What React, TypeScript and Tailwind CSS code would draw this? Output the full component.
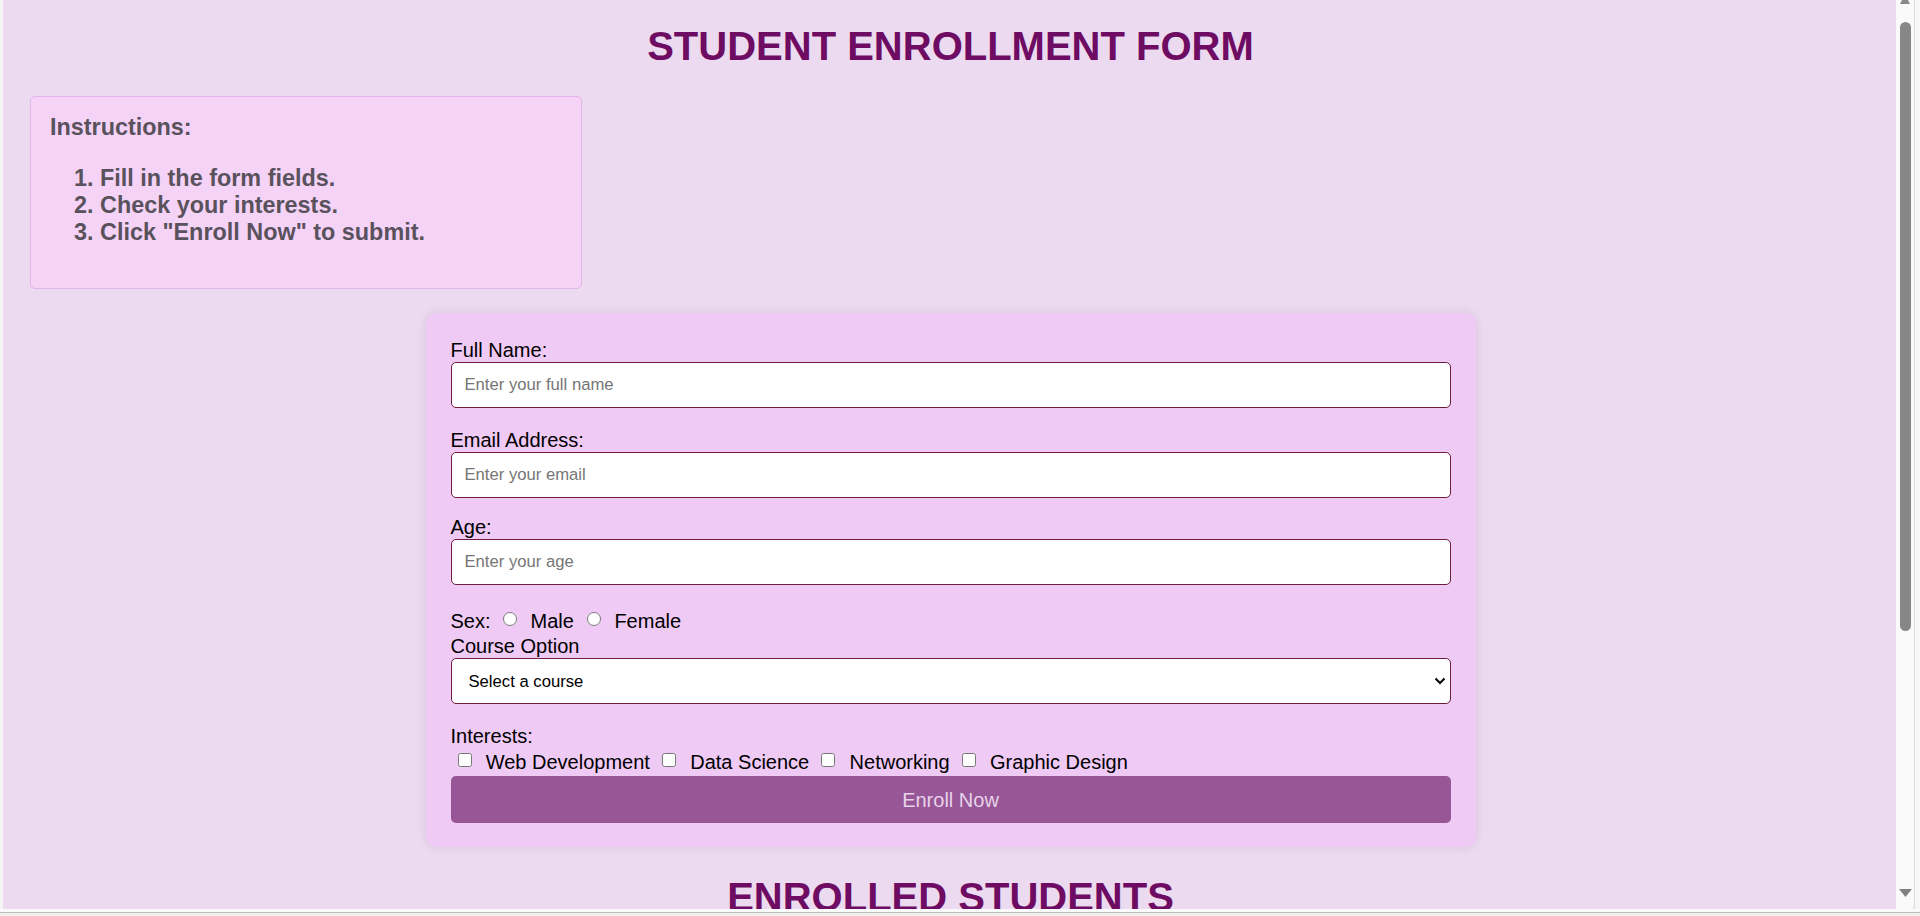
import React from "react";

const FONT = { fontFamily: '"Liberation Sans", Arial, sans-serif' };

function Field({ label, placeholder, mb }: { label: string; placeholder: string; mb: string }) {
  return (
    <div className={mb}>
      <label className="block text-[20px] leading-[24px] text-black">{label}</label>
      <input
        type="text"
        placeholder={placeholder}
        className="block h-[46px] w-full rounded-[5px] border border-[#6f1d3d] bg-white px-[13px] text-[16.67px] text-black outline-none placeholder:text-[#757575]"
      />
    </div>
  );
}

export default function App() {
  const interests = [
    { name: "Web Development", mr: "mr-[12.2px]" },
    { name: "Data Science", mr: "mr-[12.2px]" },
    { name: "Networking", mr: "mr-[12.2px]" },
    { name: "Graphic Design", mr: "mr-0" },
  ];
  return (
    <div className="flex h-[916px] w-[1920px] flex-col overflow-hidden bg-[#efefef]" style={FONT}>
      <div className="flex h-[909px]">
        <div className="w-[3px] bg-[#f4f4f4]" />
        <main className="flex-1 overflow-hidden bg-[#ecdaf0]">
          <h1 className="mt-[23px] pl-[2px] text-center text-[40px] font-bold leading-[46px] text-[#6e0b62]">
            STUDENT ENROLLMENT FORM
          </h1>

          <div className="ml-[27px] mt-[27px] h-[193px] w-[552px] rounded-[5px] border border-[#e3b4e9] bg-[#f5d3f7] pl-[19px] pt-[17px] text-[#59525c]">
            <div className="text-[23.4px] font-bold leading-[27px]">Instructions:</div>
            <div className="mt-[24px] pl-[24px] text-[23.4px] font-bold leading-[27px]">
              <div>1. Fill in the form fields.</div>
              <div>2. Check your interests.</div>
              <div>3. Click "Enroll Now" to submit.</div>
            </div>
          </div>

          <div className="mt-[24px] pl-[2px]">
            <div className="mx-auto w-[1050px] rounded-[10px] bg-[#efcaf5] px-[25px] pb-[24px] pt-[25px] shadow-[0_0_10px_rgba(0,0,0,0.1)]">
              <Field label="Full Name:" placeholder="Enter your full name" mb="mb-[20px]" />
              <Field label="Email Address:" placeholder="Enter your email" mb="mb-[17px]" />
              <Field label="Age:" placeholder="Enter your age" mb="mb-0" />

              <div className="mt-[24px] flex h-[24px] items-center text-[20px] text-black">
                <span>Sex:</span>
                <input type="radio" name="sex" className="ml-[12px] h-[14px] w-[14px] -translate-y-[2px]" />
                <span className="ml-[14px]">Male</span>
                <input type="radio" name="sex" className="ml-[13.5px] h-[14px] w-[14px] -translate-y-[2px]" />
                <span className="ml-[13px]">Female</span>
              </div>

              <label className="mt-[1px] block text-[20px] leading-[24px] text-black">Course Option</label>
              <div className="relative">
                <select className="block h-[46px] w-full appearance-none rounded-[5px] border border-[#6f1d3d] bg-white pl-[17px] text-[16.67px] text-black outline-none">
                  <option>Select a course</option>
                </select>
                <svg
                  width="12"
                  height="8"
                  viewBox="0 0 12 8"
                  className="pointer-events-none absolute right-[5px] top-1/2 -translate-y-1/2"
                >
                  <polyline points="1.5,1.5 6,6 10.5,1.5" fill="none" stroke="#000" strokeWidth="2" />
                </svg>
              </div>

              <div className="mt-[20px] text-[20px] leading-[24px] text-black">Interests:</div>
              <div className="flex h-[28px] items-center text-[20px] text-black">
                {interests.map((it, i) => (
                  <React.Fragment key={it.name}>
                    <input
                      type="checkbox"
                      className={`${i === 0 ? "ml-[7px]" : "ml-0"} mr-[14.2px] h-[14px] w-[14px] -translate-y-[2px]`}
                    />
                    <span className={it.mr}>{it.name}</span>
                  </React.Fragment>
                ))}
              </div>

              <button className="block h-[47px] w-full rounded-[5px] bg-[#975797] text-[20px] text-[#e8d2ea]">
                Enroll Now
              </button>
            </div>
          </div>

          <h2 className="mt-[27px] pl-[2px] text-center text-[40px] font-bold leading-[46px] text-[#6e0b62]">
            ENROLLED STUDENTS
          </h2>
        </main>
        <div className="flex w-[24px]">
          <div className="flex w-[18px] flex-col items-center rounded-br-[6px] bg-[#fafafa]">
            <svg width="12" height="4" viewBox="0 0 12 4" className="block">
              <polygon points="1,4 11,4 9,0 3,0" fill="#8a8a8a" />
            </svg>
            <div className="ml-[1px] mt-[18px] h-[609px] w-[11px] rounded-full bg-[#878787]" />
            <svg width="13" height="8" viewBox="0 0 13 8" className="mb-[12px] ml-[1px] mt-auto block">
              <polygon points="0,0 13,0 6.5,8" fill="#808080" />
            </svg>
          </div>
          <div className="w-px bg-[#dcdcdc]" />
          <div className="flex-1 bg-[#f7f7f7]" />
        </div>
      </div>
      <div className="h-[3px] bg-[#fafafa]" />
      <div className="h-px bg-[#bdbdbd]" />
      <div className="flex-1 bg-[#efefef]" />
    </div>
  );
}
